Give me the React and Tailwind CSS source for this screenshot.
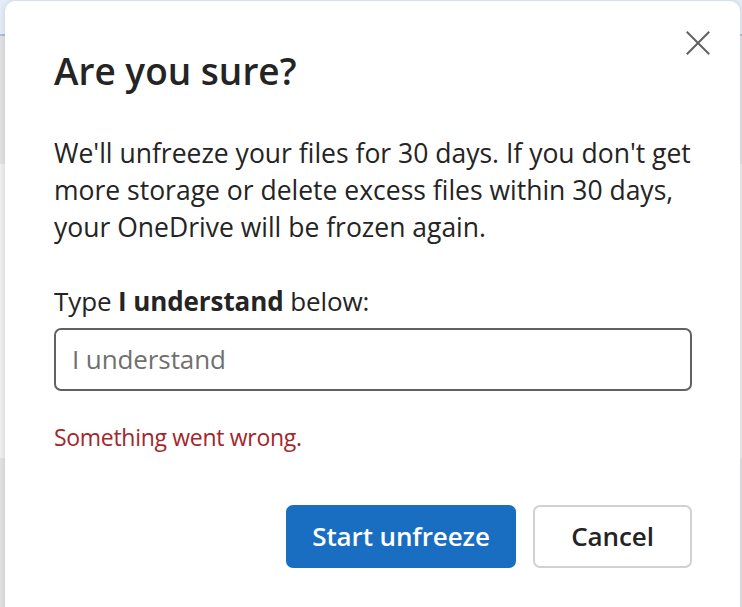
import React from 'react';

function CloseIcon() {
  return (
    <svg width="24" height="24" viewBox="0 0 24 24" fill="none" stroke="#616161" strokeWidth="2" strokeLinecap="square">
      <path d="M1.5 1.5 L22.5 22.5 M22.5 1.5 L1.5 22.5" />
    </svg>
  );
}

export default function App() {
  return (
    <div className="relative w-[742px] h-[607px] overflow-hidden bg-[#e6e6e6] font-['Open_Sans',_'Noto_Sans',_sans-serif]">
      {/* page behind the dialog */}
      <div className="flex flex-col h-full">
        <div className="h-[36px] bg-[#e3ecf7] border-b-2 border-[#aebfd4]" />
        <div className="h-[128px] bg-[#e2e2e4]" />
        <div className="h-[294px] bg-[#efefef]" />
        <div className="flex-1 bg-[#e2e2e4]" />
      </div>

      {/* dialog */}
      <div className="absolute left-[5px] top-[1px] w-[735px] h-[640px] rounded-[10px] bg-white shadow-[0_0_6px_rgba(0,0,0,0.12)] pl-[49px] pr-[40px] text-[#242424]">
        <button className="absolute right-[30px] top-[30px] p-0">
          <CloseIcon />
        </button>

        <h1 className="mt-[48px] text-[37px] leading-[44px] font-semibold">Are you sure?</h1>

        <p className="mt-[42px] text-[26.5px] leading-[37px] whitespace-nowrap">
          We'll unfreeze your files for 30 days. If you don't get<br />
          more storage or delete excess files within 30 days,<br />
          your OneDrive will be frozen again.
        </p>

        <p className="mt-[39px] text-[26px] leading-[32px] tracking-[-0.1px]">
          Type <span className="font-bold">I understand</span> below:
        </p>

        <div className="mt-[11px] w-[638px] h-[63px] rounded-[7px] border-2 border-[#616161] flex items-center pl-[16px]">
          <span className="text-[26px] tracking-[-0.1px] text-[#707070]">I understand</span>
        </div>

        <p className="mt-[31px] text-[23px] leading-[30px] tracking-[-0.3px] text-[#a4262c]">Something went wrong.</p>

        <div className="mt-[53px] w-[638px] flex justify-end gap-[17px]">
          <button className="w-[230px] h-[63px] rounded-[7px] bg-[#1a6ec2] text-white text-[26px] font-semibold tracking-[-0.1px]">
            Start unfreeze
          </button>
          <button className="w-[159px] h-[63px] rounded-[7px] border-2 border-[#d1d1d1] bg-white text-[#242424] text-[26px] font-semibold tracking-[-0.1px]">
            Cancel
          </button>
        </div>
      </div>
    </div>
  );
}
